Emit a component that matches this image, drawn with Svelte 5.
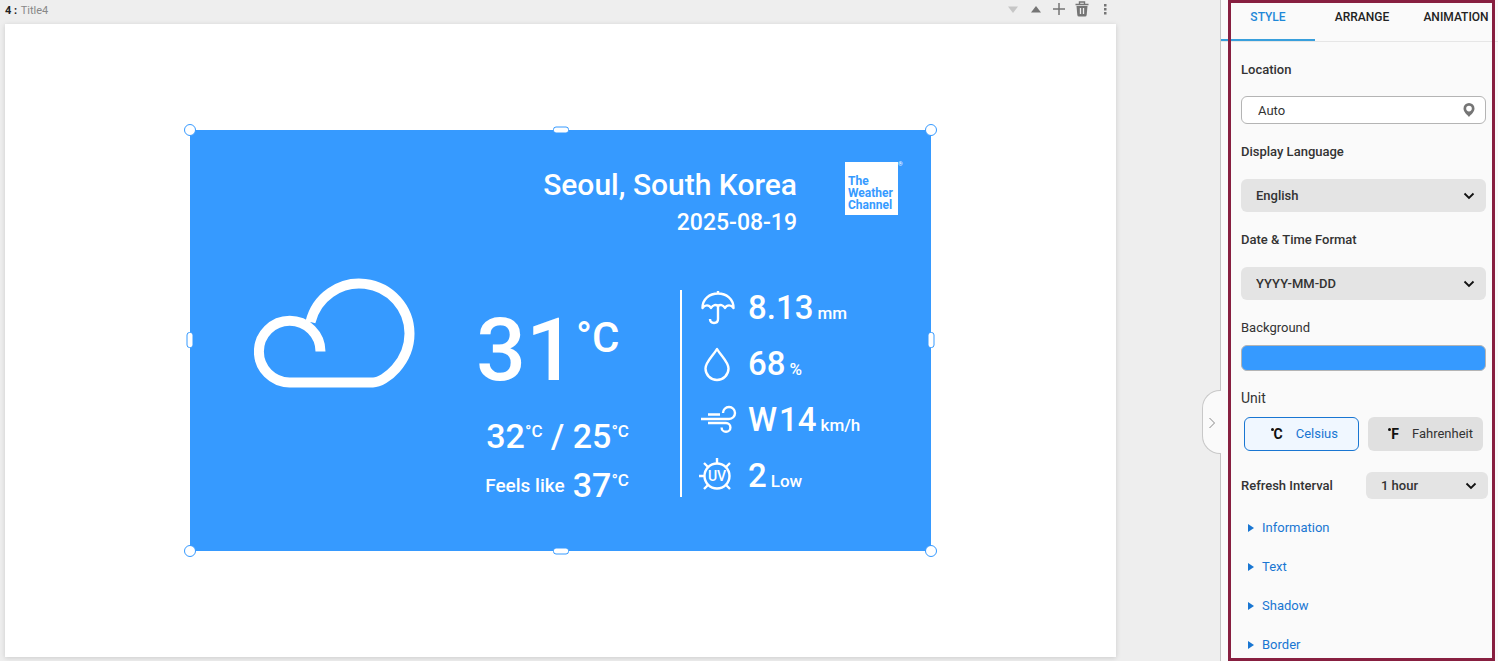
<!--
  Page editor: the slide canvas with the selected weather widget, and
  the property panel that edits its style.
-->
<script>
  const tabs = ['STYLE', 'ARRANGE', 'ANIMATION'];
  const sections = ['Information', 'Text', 'Shadow', 'Border'];
  const handles = ['nw', 'n', 'ne', 'e', 'se', 's', 'sw', 'w'];
  const stats = [
    { icon: 'rain', value: '8.13', unit: 'mm' },
    { icon: 'humidity', value: '68', unit: '%' },
    { icon: 'wind', direction: 'W', value: '14', unit: 'km/h' },
    { icon: 'uv', value: '2', unit: 'Low' },
  ];

  let activeTab = $state('STYLE');
  let location = $state('Auto');
  let language = $state('English');
  let dateFormat = $state('YYYY-MM-DD');
  let unit = $state('C');
  let interval = $state('1 hour');
</script>

{#snippet chevron()}
  <svg class="chevron" viewBox="0 0 12 8" aria-hidden="true">
    <path d="M1.500 1.500 6 6 10.500 1.500" fill="none" stroke="#111" stroke-width="1.800" />
  </svg>
{/snippet}

{#snippet degrees(value)}
  <span class="deg">{value}<sup>°C</sup></span>
{/snippet}

<div class="editor">
  <main class="workspace">
    <header class="page-bar">
      <p class="page-name"><b>4 :</b> Title4</p>
      <div class="page-tools">
        <button type="button" aria-label="Move down" disabled>
          <svg viewBox="0 0 16 16"><path d="M3 5.500h10L8 12z" fill="#c6c6c6" /></svg>
        </button>
        <button type="button" aria-label="Move up">
          <svg viewBox="0 0 16 16"><path d="M3 11.500h10L8 5z" fill="#757575" /></svg>
        </button>
        <button type="button" aria-label="Add page">
          <svg viewBox="0 0 16 16"><path d="M8 2v12M2 8h12" stroke="#757575" stroke-width="1.500" /></svg>
        </button>
        <button type="button" aria-label="Delete page">
          <svg viewBox="0 0 16 16">
            <path d="M1.500 3.500h13M5.500 3V1h5v2" fill="none" stroke="#757575" stroke-width="1.400" />
            <path d="M2.500 5h11l-.8 9q-.2 1.500-1.700 1.500H5q-1.500 0-1.700-1.500z" fill="#757575" />
            <path d="M6.500 7v6M9.500 7v6" stroke="#eee" stroke-width="1.300" />
          </svg>
        </button>
        <button type="button" aria-label="More">
          <svg viewBox="0 0 16 16" fill="#757575">
            <rect x="7" y="3" width="2.500" height="2.500" /><rect x="7" y="7" width="2.500" height="2.500" />
            <rect x="7" y="11" width="2.500" height="2.500" />
          </svg>
        </button>
      </div>
    </header>

    <section class="canvas">
      <article class="widget">
        <header class="widget-head">
          <div class="place">
            <h1>Seoul, South Korea</h1>
            <time datetime="2025-08-19">2025-08-19</time>
          </div>
          <div class="brand">The<br />Weather<br />Channel<span class="reg">®</span></div>
        </header>

        <div class="widget-body">
          <svg class="cloud" viewBox="0 0 162 110" aria-label="Cloudy">
            <path
              d="M66.500 73.500A30.800 30.800 0 1 0 35.500 104.400H119C131 104.400 155.500 84 155.500 55.500A50.200 50.200 0 0 0 56.500 44"
              fill="none"
              stroke="#fff"
              stroke-width="10"
            />
          </svg>

          <div class="temps">
            <div class="now">{@render degrees('31')}</div>
            <div class="range">{@render degrees('32')} / {@render degrees('25')}</div>
            <div class="feels"><span class="feels-label">Feels like</span>{@render degrees('37')}</div>
          </div>

          <ul class="stats">
            {#each stats as stat (stat.icon)}
              <li>
                <svg viewBox="0 0 38 36" fill="none" stroke="#fff" stroke-width="2.400" aria-hidden="true">
                  {#if stat.icon === 'rain'}
                    <path d="M19 1v3M3.500 18C3.500 9 10.500 3.500 19 3.500S34.500 9 34.500 18C32 14.500 28 14.500 26 18 24 14.500 21 14.500 19 16 17 14.500 14 14.500 12 18 10 14.500 6 14.500 3.500 18z" stroke-linejoin="round" />
                    <path d="M19 16v13q0 4-4 4t-4-4" />
                  {:else if stat.icon === 'humidity'}
                    <path d="M18 3C14 10 6.500 16 6.500 22.500a11.500 11.500 0 0 0 23 0C29.500 16 22 10 18 3z" stroke-linejoin="round" />
                  {:else if stat.icon === 'wind'}
                    <path d="M2 17h28a6 6 0 1 0-6-6M9 12.500h12M9 21h18a4.400 4.400 0 1 1-4.400 4.400" />
                  {:else}
                    <circle cx="18" cy="18" r="12.500" />
                    <path d="M18 5.500V0M0 18h5.500M9 9 5 5M27 9l4-4M9 27l-4 4M27 27l4 4" />
                    <text x="18" y="23" text-anchor="middle">UV</text>
                  {/if}
                </svg>
                {#if stat.direction}<span class="direction">{stat.direction}</span>{/if}
                <span class="value">{stat.value}</span>
                <span class="unit">{stat.unit}</span>
              </li>
            {/each}
          </ul>
        </div>

        {#each handles as handle (handle)}
          <span class="handle {handle}"></span>
        {/each}
      </article>
    </section>
  </main>

  <aside class="panel">
    <button type="button" class="collapse" aria-label="Collapse panel">
      <svg viewBox="0 0 8 12"><path d="M1.500 1 6.500 6 1.500 11" fill="none" stroke="#888" /></svg>
    </button>

    <div class="tabs" role="tablist">
      {#each tabs as tab (tab)}
        <button
          type="button"
          role="tab"
          class:active={tab === activeTab}
          aria-selected={tab === activeTab}
          onclick={() => (activeTab = tab)}
        >{tab}</button>
      {/each}
    </div>

    <form class="props">
      <label for="location">Location</label>
      <div class="field location">
        <input id="location" type="text" bind:value={location} />
        <svg class="pin" viewBox="0 0 12 14" aria-hidden="true">
          <path d="M6 0a5.500 5.500 0 0 0-5.500 5.500C.5 9 4 11.500 6 14c2-2.500 5.500-5 5.500-8.500A5.500 5.500 0 0 0 6 0zm0 2.800a2.800 2.800 0 1 1 0 5.600 2.800 2.800 0 0 1 0-5.600z" fill="#757575" />
        </svg>
      </div>

      <label for="language">Display Language</label>
      <div class="field">
        <select id="language" bind:value={language}>
          <option>English</option>
          <option>Korean</option>
        </select>
        {@render chevron()}
      </div>

      <label for="date-format">Date &amp; Time Format</label>
      <div class="field">
        <select id="date-format" bind:value={dateFormat}>
          <option>YYYY-MM-DD</option>
          <option>DD-MM-YYYY</option>
        </select>
        {@render chevron()}
      </div>

      <label class="light" for="background">Background</label>
      <button type="button" id="background" class="swatch" aria-label="Background color"></button>

      <span class="label light unit-label">Unit</span>
      <div class="units">
        <button type="button" class:selected={unit === 'C'} onclick={() => (unit = 'C')}>
          <span class="glyph">C</span>Celsius
        </button>
        <button type="button" class:selected={unit === 'F'} onclick={() => (unit = 'F')}>
          <span class="glyph">F</span>Fahrenheit
        </button>
      </div>

      <div class="refresh">
        <label for="interval">Refresh Interval</label>
        <div class="field small">
          <select id="interval" bind:value={interval}>
            <option>1 hour</option>
            <option>3 hours</option>
          </select>
          {@render chevron()}
        </div>
      </div>

      <div class="sections">
        {#each sections as section (section)}
          <details>
            <summary>
              <svg viewBox="0 0 6 8" aria-hidden="true"><path d="M0 0 6 4 0 8z" fill="#1976d2" /></svg>{section}
            </summary>
          </details>
        {/each}
      </div>
    </form>
    <div class="frame"></div>
  </aside>
</div>

<style>
  :global(body) {
    margin: 0;
    overflow: hidden;
  }
  .editor {
    display: flex;
    min-height: 100vh;
    background: #eee;
    color: #333;
    font: 500 13px/20px Roboto, "Noto Sans", sans-serif;
  }
  button, input, select {
    font: inherit;
    color: inherit;
    box-sizing: border-box;
  }
  button { padding: 0; border: 0; background: none; cursor: pointer; }

  /* page + toolbar */
  .workspace {
    flex: 1;
    display: flex;
    flex-direction: column;
    padding: 0 104px 4px 5px;
  }
  .page-bar {
    display: flex;
    justify-content: space-between;
    height: 24px;
  }
  .page-name { margin: 1px 0 0; font-size: 11px; font-weight: 400; color: #888; }
  .page-name b { color: #222; margin-right: 1px; }
  .page-tools { display: flex; height: 18px; }
  .page-tools button { width: 23px; display: grid; place-items: center; }
  .page-tools svg { width: 16px; height: 16px; }
  .canvas {
    flex: 1;
    display: grid;
    place-items: center;
    background: #fff;
    box-shadow: 0 1px 5px rgba(0, 0, 0, 0.15);
  }

  /* weather widget */
  .widget {
    position: relative;
    box-sizing: border-box;
    width: 66.7%;
    min-width: 720px;
    aspect-ratio: 741 / 421;
    padding: 32px 33px 0 64px;
    background: #369aff;
    color: #fff;
  }
  .widget-head {
    display: flex;
    justify-content: flex-end;
    gap: 48px;
  }
  .place { text-align: right; line-height: 38px; padding-top: 4px; }
  .place h1 { margin: 0; font-size: 30px; font-weight: 500; }
  .place time { display: block; font-size: 23px; }
  .brand {
    position: relative;
    box-sizing: border-box;
    width: 53px;
    height: 53px;
    padding: 13px 0 0 3px;
    background: #fff;
    color: #369aff;
    font-size: 12px;
    font-weight: 700;
    line-height: 12px;
  }
  .reg { position: absolute; left: 100%; top: -4px; color: #fff; font-size: 6px; }
  .widget-body {
    display: flex;
    align-items: flex-start;
    margin-top: 36px;
  }
  .cloud { width: 162px; height: 110px; }
  .temps {
    width: 153px;
    margin-left: 60px;
    padding-top: 22px;
    white-space: nowrap;
  }
  .deg sup { vertical-align: top; }
  .now { height: 94px; font-size: 88px; line-height: 100px; }
  .now :global(sup) { font-size: 42px; line-height: 76px; }
  .range, .feels { height: 49px; font-size: 34px; line-height: 49px; }
  .range :global(sup), .feels :global(sup) { font-size: 17px; line-height: 38px; }
  .range { margin-top: 18px; text-align: right; }
  .feels {
    display: flex;
    align-items: center;
    justify-content: flex-end;
    gap: 8px;
  }
  .feels-label { font-size: 19px; }
  .stats {
    display: flex;
    flex-direction: column;
    gap: 22px;
    margin: 12px 0 0 51px;
    padding: 1px 0 4px 17px;
    border-left: 2px solid #fff;
    list-style: none;
  }
  .stats li { display: flex; align-items: baseline; height: 34px; line-height: 34px; }
  .stats svg { width: 38px; height: 36px; margin-right: 11px; align-self: center; }
  .stats text { font-size: 14px; font-weight: 500; fill: #fff; stroke: none; }
  .value, .direction { font-size: 33px; }
  .direction { margin-right: 2px; }
  .value { margin-right: 4px; }
  .unit { font-size: 17px; }

  .handle {
    position: absolute;
    box-sizing: border-box;
    width: 12px;
    height: 12px;
    background: #fff;
    border: 1px solid #369aff;
    border-radius: 6px;
    transform: translate(-50%, -50%);
  }
  .n, .s { width: 16px; height: 7px; border-radius: 3px; }
  .e, .w { width: 7px; height: 16px; border-radius: 3px; }
  .nw, .n, .ne { top: 0; }
  .e, .w { top: 50%; }
  .sw, .s, .se { top: 100%; }
  .nw, .w, .sw { left: 0; }
  .n, .s { left: 50%; }
  .ne, .e, .se { left: 100%; }

  /* property panel */
  .panel {
    position: relative;
    box-sizing: border-box;
    flex: 0 0 278px;
    min-width: 0;
    border-left: 1px solid #c4c4c4;
    background: #fafafa;
  }
  .collapse {
    position: absolute;
    top: 59%;
    left: -19px;
    width: 19px;
    height: 64px;
    border: 1px solid #c8c8c8;
    border-right: 0;
    border-radius: 18px 0 0 18px;
    background: #fafafa;
  }
  .collapse svg { width: 8px; height: 12px; vertical-align: middle; }
  .frame {
    position: absolute;
    inset: 0 3px 0 7px;
    border: 3px solid #871f40;
    pointer-events: none;
  }
  .tabs { display: flex; overflow: hidden; border-bottom: 1px solid #e6e6e6; }
  .tabs button {
    flex: 0 0 94px;
    height: 41px;
    padding-bottom: 6px;
    border-bottom: 2px solid transparent;
    font-size: 12px;
    color: #222;
  }
  .tabs button.active { color: #1e88d8; border-color: #389fdc; }

  .props { padding: 18px 12px 0 20px; }
  .props label, .label { display: block; }
  .props .light { font-weight: 400; }
  .field {
    position: relative;
    height: 33px;
    margin: 17px 0 18px;
  }
  .field input, .field select {
    width: 100%;
    height: 100%;
    border: 0;
    border-radius: 6px;
    background: #e4e4e4;
    appearance: none;
    padding: 0 15px;
  }
  .field.location { height: 28px; margin-top: 16px; }
  .field input {
    border: 1px solid #b4b4b4;
    background: #fff;
    padding: 0 16px;
    font-weight: 400;
  }
  .chevron, .pin {
    position: absolute;
    top: 50%;
    right: 11px;
    width: 12px;
    transform: translateY(-50%);
    pointer-events: none;
  }
  .chevron { height: 8px; }
  .pin { height: 14px; }
  .swatch {
    display: block;
    width: 100%;
    height: 26px;
    margin: 7px 0 17px;
    border: 1px solid #b4b4b4;
    border-radius: 6px;
    background: #369aff;
  }
  .props .unit-label { font-size: 14px; }
  .units {
    display: grid;
    grid-template-columns: 1fr 1fr;
    gap: 9px;
    margin: 9px 3px 21px;
  }
  .units button {
    display: flex;
    align-items: center;
    justify-content: flex-end;
    gap: 13px;
    height: 34px;
    padding: 0 10px 0 0;
    border-radius: 6px;
    background: #e0e0e0;
    font-weight: 400;
  }
  .units button.selected {
    padding-right: 20px;
    border: 1px solid #1976d2;
    background: #f0f7ff;
    color: #1976d2;
  }
  .glyph { display: flex; color: #111; font-size: 14px; font-weight: 700; }
  /* degree dot in front of the unit letter */
  .glyph::before {
    content: '';
    width: 3px;
    height: 3px;
    margin-top: 4px;
    border-radius: 50%;
    background: #111;
  }
  .refresh { display: flex; align-items: center; justify-content: space-between; }
  .field.small { width: 122px; height: 27px; margin: 0 -2px 0 0; }
  .sections {
    display: flex;
    flex-direction: column;
    gap: 19px;
    margin-top: 19px;
  }
  summary {
    display: flex;
    align-items: center;
    gap: 8px;
    padding-left: 7px;
    color: #1976d2;
    font-weight: 400;
    list-style: none;
    cursor: pointer;
  }
  summary svg { width: 6px; height: 8px; }
</style>
